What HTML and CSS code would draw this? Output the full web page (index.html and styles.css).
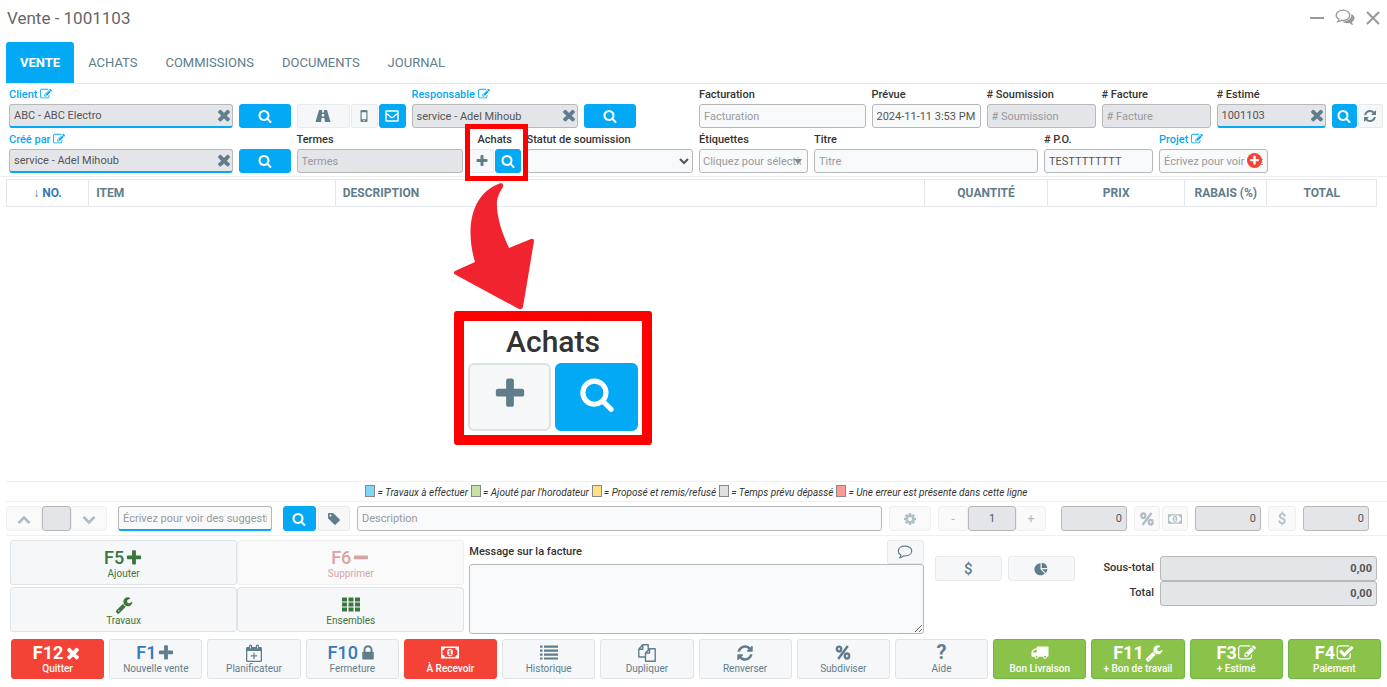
FILE: index.html
```html
<!DOCTYPE html>
<html lang="fr">
<head>
    <meta charset="UTF-8">
    <meta name="viewport" content="width=device-width, initial-scale=1.0">
    <title>Vente - 1001103</title>
    <link rel="stylesheet" href="styles.css">
</head>
<body>
    <!-- Icons -->
    <svg class="sprite" aria-hidden="true">
        <symbol id="search" viewBox="0 0 1792 1792"><path d="M1216 832q0-185-131.5-316.5t-316.5-131.5-316.5 131.5-131.5 316.5 131.5 316.5 316.5 131.5 316.5-131.5 131.5-316.5zm512 832q0 52-38 90t-90 38q-54 0-90-38l-343-342q-179 124-399 124-143 0-273.5-55.5t-225-150-150-225-55.5-273.5 55.5-273.5 150-225 225-150 273.5-55.5 273.5 55.5 225 150 150 225 55.5 273.5q0 220-124 399l343 343q37 37 37 90z"/></symbol>
        <symbol id="plus" viewBox="0 0 1792 1792"><path d="M1600 736v192q0 40-28 68t-68 28h-416v416q0 40-28 68t-68 28h-192q-40 0-68-28t-28-68v-416h-416q-40 0-68-28t-28-68v-192q0-40 28-68t68-28h416v-416q0-40 28-68t68-28h192q40 0 68 28t28 68v416h416q40 0 68 28t28 68z"/></symbol>
        <symbol id="minus" viewBox="0 0 1792 1792"><path d="M1600 736v192q0 40-28 68t-68 28h-1216q-40 0-68-28t-28-68v-192q0-40 28-68t68-28h1216q40 0 68 28t28 68z"/></symbol>
        <symbol id="times" viewBox="0 0 1792 1792"><path d="M1490 1322q0 40-28 68l-136 136q-28 28-68 28t-68-28l-294-294-294 294q-28 28-68 28t-68-28l-136-136q-28-28-28-68t28-68l294-294-294-294q-28-28-28-68t28-68l136-136q28-28 68-28t68 28l294 294 294-294q28-28 68-28t68 28l136 136q28 28 28 68t-28 68l-294 294 294 294q28 28 28 68z"/></symbol>
        <symbol id="edit" viewBox="0 0 1792 1792"><path d="M888 1184l116-116-152-152-116 116v56h96v96h56zm440-720q-16-16-33 1l-350 350q-17 17-1 33t33-1l350-350q17-17 1-33zm80 594v190q0 119-84.5 203.5t-203.5 84.5h-832q-119 0-203.5-84.5t-84.5-203.5v-832q0-119 84.5-203.5t203.5-84.5h832q63 0 117 25 15 7 18 23 3 17-9 29l-49 49q-14 14-32 8-23-6-45-6h-832q-66 0-113 47t-47 113v832q0 66 47 113t113 47h832q66 0 113-47t47-113v-126q0-13 9-22l64-64q15-15 35-7t20 29zm-96-738l288 288-672 672h-288v-288zm444 132l-92 92-288-288 92-92q28-28 68-28t68 28l152 152q28 28 28 68t-28 68z"/></symbol>
        <symbol id="check" viewBox="0 0 1792 1792"><path d="M1472 930v318q0 119-84.5 203.5t-203.5 84.5h-832q-119 0-203.5-84.5t-84.5-203.5v-832q0-119 84.5-203.5t203.5-84.5h832q63 0 117 25 15 7 18 23 3 17-9 29l-49 49q-10 10-23 10-3 0-9-2-23-6-45-6h-832q-66 0-113 47t-47 113v832q0 66 47 113t113 47h832q66 0 113-47t47-113v-254q0-13 9-22l64-64q10-10 23-10 6 0 12 3 20 8 20 29zm231-489l-814 814q-24 24-57 24t-57-24l-430-430q-24-24-24-57t24-57l110-110q24-24 57-24t57 24l263 263 647-647q24-24 57-24t57 24l110 110q24 24 24 57t-24 57z"/></symbol>
        <symbol id="wrench" viewBox="0 0 1792 1792"><path d="M448 1472q0-26-19-45t-45-19-45 19-19 45 19 45 45 19 45-19 19-45zm644-420l-682 682q-37 37-90 37-52 0-91-37l-106-108q-38-36-38-90 0-53 38-91l681-681q39 98 114.5 173.5t173.5 114.5zm634-435q0 39-23 106-47 134-164.5 217.5t-258.5 83.5q-185 0-316.5-131.5t-131.5-316.5 131.5-316.5 316.5-131.5q58 0 121.5 16.5t107.5 46.5q16 11 16 28t-16 28l-293 169v224l193 107q5-3 79-48.5t135.5-81 70.5-35.5q15 0 23.5 10t8.5 25z"/></symbol>
        <symbol id="lock" viewBox="0 0 1792 1792"><path d="M640 768h512v-192q0-106-75-181t-181-75-181 75-75 181v192zm832 96v576q0 40-28 68t-68 28h-960q-40 0-68-28t-28-68v-576q0-40 28-68t68-28h32v-192q0-184 132-316t316-132 316 132 132 316v192h32q40 0 68 28t28 68z"/></symbol>
        <symbol id="refresh" viewBox="0 0 1792 1792"><path d="M1639 1056q0 5-1 7-64 268-268 434.5t-478 166.5q-146 0-282.5-55t-243.5-157l-129 129q-19 19-45 19t-45-19-19-45v-448q0-26 19-45t45-19h448q26 0 45 19t19 45-19 45l-137 137q71 66 161 102t187 36q134 0 250-65t186-179q11-17 53-117 8-23 30-23h192q13 0 22.5 9.5t9.5 22.5zm25-800v448q0 26-19 45t-45 19h-448q-26 0-45-19t-19-45 19-45l138-138q-148-137-349-137-134 0-250 65t-186 179q-11 17-53 117-8 23-30 23h-199q-13 0-22.5-9.5t-9.5-22.5v-7q65-268 270-434.5t480-166.5q146 0 284 55.5t245 156.5l130-129q19-19 45-19t45 19 19 45z"/></symbol>
        <symbol id="up" viewBox="0 0 1792 1792"><path d="M1683 1331l-166 165q-19 19-45 19t-45-19l-531-531-531 531q-19 19-45 19t-45-19l-166-165q-19-19-19-45.5t19-45.5l742-741q19-19 45-19t45 19l742 741q19 19 19 45.5t-19 45.5z"/></symbol>
        <symbol id="down" viewBox="0 0 1792 1792"><path d="M1683 808l-742 741q-19 19-45 19t-45-19l-742-741q-19-19-19-45.5t19-45.5l166-165q19-19 45-19t45 19l531 531 531-531q19-19 45-19t45 19l166 165q19 19 19 45.5t-19 45.5z"/></symbol>
        <symbol id="cog" viewBox="0 0 1792 1792"><path d="M1152 896q0-106-75-181t-181-75-181 75-75 181 75 181 181 75 181-75 75-181zm512-109v222q0 12-8 23t-20 13l-185 28q-19 54-39 91 35 50 107 138 10 12 10 25t-9 23q-27 37-99 108t-94 71q-12 0-26-9l-138-108q-44 23-91 38-16 136-29 186-7 28-36 28h-222q-14 0-24.5-8.5t-11.5-21.5l-28-184q-49-16-90-37l-141 107q-10 9-25 9-14 0-25-11-126-114-165-168-7-10-7-23 0-12 8-23 15-21 51-66.5t54-70.5q-27-50-41-99l-183-27q-13-2-21-12.5t-8-23.5v-222q0-12 8-23t19-13l186-28q14-46 39-92-40-57-107-138-10-12-10-24 0-10 9-23 26-36 98.5-107.5t94.5-71.5q13 0 26 10l138 107q44-23 91-38 16-136 29-186 7-28 36-28h222q14 0 24.5 8.5t11.5 21.5l28 184q49 16 90 37l142-107q9-9 24-9 13 0 25 10 129 119 165 170 7 8 7 22 0 12-8 23-15 21-51 66.5t-54 70.5q26 50 41 98l183 28q13 2 21 12.5t8 23.5z"/></symbol>
        <symbol id="tag" viewBox="0 0 1792 1792"><path d="M576 448q0-53-37.5-90.5t-90.5-37.5-90.5 37.5-37.5 90.5 37.5 90.5 90.5 37.5 90.5-37.5 37.5-90.5zm1067 576q0 53-37 90l-491 492q-39 37-91 37-53 0-90-37l-715-716q-38-37-64.5-101t-26.5-117v-416q0-52 38-90t90-38h416q53 0 117 26.5t102 64.5l715 714q37 39 37 91z"/></symbol>
        <symbol id="truck" viewBox="0 0 18 14"><path fill-rule="evenodd" d="M6.500 1h10.300a.7.700 0 0 1 .7.700v8.800a.7.700 0 0 1-.7.700H16a2 2 0 0 1-4 0H7.500a2 2 0 0 1-4 0H1.200a.7.700 0 0 1-.7-.7V6.500q0-.6.400-1l2-2q.5-.5 1.100-.5h1.800V1.700a.7.700 0 0 1 .7-.7zM4 4.300L2 6.300v.7h3.800V4.300zM5.500 10.300a.9.900 0 1 0 .01 0zM14 10.300a.9.900 0 1 0 .01 0z"/></symbol>
        <symbol id="road" viewBox="0 0 18 14"><path d="M5 1h3.200l-.2 2.500h2l-.2-2.500H13l3.500 12h-5.700l-.3-4h-3l-.3 4H1.500zM7.900 5l-.2 2.500h2.600L10.100 5z"/></symbol>
        <symbol id="mobile" viewBox="0 0 14 14"><path fill-rule="evenodd" d="M4.500 1h5a1 1 0 0 1 1 1v10a1 1 0 0 1-1 1h-5a1 1 0 0 1-1-1V2a1 1 0 0 1 1-1zM4.700 3.200v7h4.600v-7zM7 11a.7.700 0 1 0 .01 0z"/></symbol>
        <symbol id="mail" viewBox="0 0 14 14"><path fill="none" stroke="currentColor" stroke-width="1.400" stroke-linejoin="round" d="M1 2h12v10H1zM1 4l5 4.200q1 .7 2 0L13 4"/></symbol>
        <symbol id="th" viewBox="0 0 18 14"><path d="M0 0h5v4H0zM6.500 0h5v4h-5zM13 0h5v4h-5zM0 5h5v4H0zM6.500 5h5v4h-5zM13 5h5v4h-5zM0 10h5v4H0zM6.500 10h5v4h-5zM13 10h5v4h-5z"/></symbol>
        <symbol id="list" viewBox="0 0 18 14"><path d="M0 0h2.500v2.200H0zM4 0h14v2.200H4zM0 4h2.500v2.200H0zM4 4h14v2.200H4zM0 8h2.500v2.200H0zM4 8h14v2.200H4zM0 12h2.500v2H0zM4 12h14v2H4z"/></symbol>
        <symbol id="money" viewBox="0 0 18 14"><path fill-rule="evenodd" d="M0 1h18v12H0zM3.800 2.500a2.500 2.500 0 0 1-2.300 2.300v4.400a2.500 2.500 0 0 1 2.300 2.300h10.400a2.500 2.500 0 0 1 2.300-2.300V4.800a2.500 2.500 0 0 1-2.300-2.300zM9 3.300a2.900 3.700 0 1 1 0 7.400 2.900 3.700 0 0 1 0-7.400zM8.500 4.700l-1.300 1.100.6.700.5-.4v2.300h-1v.9h3.400v-.9h-1V4.700z"/></symbol>
        <symbol id="calendar" viewBox="0 0 18 18"><path fill-rule="evenodd" d="M2.300 3H4V2a1.600 1.600 0 0 1 3.200 0v1h3.600V2A1.600 1.600 0 0 1 14 2v1h1.700A1.300 1.300 0 0 1 17 4.300v12.400a1.300 1.300 0 0 1-1.300 1.300H2.300A1.300 1.300 0 0 1 1 16.700V4.300A1.300 1.300 0 0 1 2.300 3zM2.300 7v9.700h13.400V7zM5.200 2v2.500h.8V2zM12 2v2.500h.8V2zM8.400 8.800h1.200v2.500h2.500v1.200H9.600V15H8.400v-2.500H5.900v-1.200h2.500z"/></symbol>
        <symbol id="copy" viewBox="0 0 18 18"><path fill="none" stroke="currentColor" stroke-width="1.400" stroke-linejoin="round" d="M7 13H.8V5.200L4.700.8h5.500V5M4.800 1v4.200h-4M7.500 9l3.800-4.200h5.900v12.500H7.500zM11.500 5v4h-4"/></symbol>
        <symbol id="pie" viewBox="0 0 14 14"><path d="M6.500 1.300V7.300l4.200 4.200A6 6 0 1 1 6.500 1.300zM8 7.200h5.500a6 6 0 0 1-1.700 3.800zM7.700.8A6 6 0 0 1 13.200 6H7.700z"/></symbol>
        <symbol id="comment" viewBox="0 0 16 16"><path fill="none" stroke="currentColor" stroke-width="1.200" stroke-linejoin="round" d="M8 2.200c3.800 0 6.700 2 6.700 4.900S11.800 12 8 12q-.7 0-1.500-.1Q4.700 13.700 2.500 14q1.200-1.100 1.400-2.900C2.300 10.200 1.300 8.800 1.300 7.100 1.300 4.200 4.200 2.200 8 2.200z"/></symbol>
        <symbol id="comments" viewBox="0 0 20 18"><path fill="none" stroke="currentColor" stroke-width="1.300" d="M8 1.200c3.800 0 6.800 2.200 6.800 5.100S11.800 11.400 8 11.400q-.9 0-1.700-.2-1.500 1.300-3.500 1.400 1-.9 1.200-2.300C2.300 9.400 1.200 8 1.200 6.300 1.200 3.400 4.200 1.200 8 1.200z"/><path d="M16.300 5c2 .9 3.200 2.300 3.200 4.200 0 1.500-1 2.900-2.600 3.700q.4 1.600 1.500 2.900-2.200-.1-3.800-1.900c-2.900.6-5.700 0-7.300-1.400 4.700.1 9-2.400 9-6z"/></symbol>
        <symbol id="percent" viewBox="0 0 14 14"><g fill="none" stroke="currentColor" stroke-width="2.300"><ellipse cx="3.300" cy="3.800" rx="2" ry="2.300"/><ellipse cx="10.700" cy="10.200" rx="2" ry="2.300"/><path d="M11.500 1L2.500 13"/></g></symbol>
    </svg>

    <div class="page">
        <header class="titlebar">
            <h1>Vente - 1001103</h1>
            <div class="window-tools">
                <button aria-label="Réduire"><svg viewBox="0 0 14 14"><path class="line" d="M0 7h14"/></svg></button>
                <button class="chat" aria-label="Discussion"><svg><use href="#comments"/></svg></button>
                <button aria-label="Fermer"><svg viewBox="0 0 14 14"><path class="line" d="M1 1l12 12M13 1L1 13"/></svg></button>
            </div>
        </header>

        <nav class="tabs">
            <a class="active" href="#vente">VENTE</a>
            <a href="#achats">ACHATS</a>
            <a href="#commissions">COMMISSIONS</a>
            <a href="#documents">DOCUMENTS</a>
            <a href="#journal">JOURNAL</a>
        </nav>

        <form class="fields">
            <div class="field w4 linked">
                <label for="client">Client <svg><use href="#edit"/></svg></label>
                <div class="box"><input id="client" class="locked" value="ABC - ABC Electro"><button type="button" class="clear" aria-label="Effacer"><svg><use href="#times"/></svg></button></div>
            </div>
            <div class="field"><button type="button" class="btn blue" aria-label="Chercher"><svg><use href="#search"/></svg></button></div>
            <div class="field w2">
                <div class="contact">
                    <button type="button" class="btn" aria-label="Itinéraire"><svg class="wide"><use href="#road"/></svg></button>
                    <button type="button" class="btn" aria-label="Mobile"><svg><use href="#mobile"/></svg></button>
                    <button type="button" class="btn blue" aria-label="Courriel"><svg><use href="#mail"/></svg></button>
                </div>
            </div>
            <div class="field w3 linked">
                <label for="responsable">Responsable <svg><use href="#edit"/></svg></label>
                <div class="box"><input id="responsable" class="locked plain" value="service - Adel Mihoub"><button type="button" class="clear" aria-label="Effacer"><svg><use href="#times"/></svg></button></div>
            </div>
            <div class="field"><button type="button" class="btn blue" aria-label="Chercher"><svg><use href="#search"/></svg></button></div>
            <div class="field"></div>
            <div class="field w3">
                <label for="facturation">Facturation</label>
                <input id="facturation" placeholder="Facturation">
            </div>
            <div class="field w2">
                <label for="prevue">Prévue</label>
                <input id="prevue" value="2024-11-11 3:53 PM">
            </div>
            <div class="field w2">
                <label for="soumission"># Soumission</label>
                <input id="soumission" class="locked" placeholder="# Soumission">
            </div>
            <div class="field w2">
                <label for="facture"># Facture</label>
                <input id="facture" class="locked" placeholder="# Facture">
            </div>
            <div class="field w2 linked dark">
                <label for="estime"># Estimé</label>
                <div class="box"><input id="estime" class="locked" value="1001103"><button type="button" class="clear" aria-label="Effacer"><svg><use href="#times"/></svg></button></div>
            </div>
            <div class="field">
                <div class="pair">
                    <button type="button" class="btn blue" aria-label="Chercher"><svg><use href="#search"/></svg></button>
                    <button type="button" class="btn" aria-label="Rafraîchir"><svg><use href="#refresh"/></svg></button>
                </div>
            </div>

            <div class="field w4 linked">
                <label for="cree">Créé par <svg><use href="#edit"/></svg></label>
                <div class="box"><input id="cree" class="locked" value="service - Adel Mihoub"><button type="button" class="clear" aria-label="Effacer"><svg><use href="#times"/></svg></button></div>
            </div>
            <div class="field"><button type="button" class="btn blue" aria-label="Chercher"><svg><use href="#search"/></svg></button></div>
            <div class="field w3">
                <label for="termes">Termes</label>
                <input id="termes" class="locked" placeholder="Termes">
            </div>
            <div class="field achats">
                <span class="caption">Achats</span>
                <div class="pair">
                    <button type="button" class="btn" aria-label="Ajouter un achat"><svg><use href="#plus"/></svg></button>
                    <button type="button" class="btn blue" aria-label="Chercher un achat"><svg><use href="#search"/></svg></button>
                </div>
                <!-- Highlight, arrow and enlarged copy of the Achats buttons -->
                <div class="highlight"></div>
                <svg class="arrow" viewBox="0 0 80 128"><path d="M47 1q3 1 2 4-5 7-6 14c-1 15 5 32 12 47l22-9q3-1 3 2l-11 66q-1 3-4 2L2 93q-4-2-1-4l20-9C11 46 17 11 47 1z"/></svg>
                <div class="callout">
                    <span>Achats</span>
                    <div class="callout-buttons">
                        <div class="big"><svg><use href="#plus"/></svg></div>
                        <div class="big blue"><svg><use href="#search"/></svg></div>
                    </div>
                </div>
            </div>
            <div class="field w3">
                <label for="statut">Statut de soumission</label>
                <select id="statut"><option></option></select>
            </div>
            <div class="field w2">
                <label for="etiquettes">Étiquettes</label>
                <div class="box tags"><input id="etiquettes" placeholder="Cliquez pour sélectionner"></div>
            </div>
            <div class="field w4">
                <label for="titre">Titre</label>
                <input id="titre" placeholder="Titre">
            </div>
            <div class="field w2">
                <label for="po"># P.O.</label>
                <input id="po" value="TESTTTTTTTT">
            </div>
            <div class="field w2 project">
                <label for="projet">Projet <svg><use href="#edit"/></svg></label>
                <div class="box"><input id="projet" placeholder="Écrivez pour voir des suggestions"><button type="button" class="add" aria-label="Ajouter"><svg><use href="#plus"/></svg></button></div>
            </div>
        </form>

        <main class="items">
            <table>
                <thead>
                    <tr>
                        <th class="c-no">↓ NO.</th>
                        <th class="c-item">ITEM</th>
                        <th class="c-desc">DESCRIPTION</th>
                        <th class="c-qty">QUANTITÉ</th>
                        <th class="c-price">PRIX</th>
                        <th class="c-off">RABAIS (%)</th>
                        <th class="c-total">TOTAL</th>
                    </tr>
                </thead>
            </table>
        </main>

        <div class="legend">
            <span><i class="todo"></i>= Travaux à effectuer</span>
            <span><i class="clock"></i>= Ajouté par l'horodateur</span>
            <span><i class="refused"></i>= Proposé et remis/refusé</span>
            <span><i class="late"></i>= Temps prévu dépassé</span>
            <span><i class="error"></i>= Une erreur est présente dans cette ligne</span>
        </div>

        <div class="entry">
            <div class="group mover">
                <button class="btn" disabled aria-label="Monter"><svg><use href="#up"/></svg></button>
                <input class="locked" aria-label="Position">
                <button class="btn" disabled aria-label="Descendre"><svg><use href="#down"/></svg></button>
            </div>
            <input class="suggest" placeholder="Écrivez pour voir des suggestions" aria-label="Item">
            <div class="pair lookup">
                <button class="btn blue" aria-label="Chercher"><svg><use href="#search"/></svg></button>
                <button class="btn" aria-label="Étiquette"><svg><use href="#tag"/></svg></button>
            </div>
            <input class="description" placeholder="Description" aria-label="Description">
            <button class="btn gear" disabled aria-label="Options"><svg><use href="#cog"/></svg></button>
            <div class="group stepper">
                <button class="btn" disabled>-</button>
                <input class="locked" value="1" aria-label="Quantité">
                <button class="btn" disabled>+</button>
            </div>
            <input class="locked amount" value="0" aria-label="Prix">
            <div class="pair rebate">
                <button class="btn" disabled aria-label="Pourcentage"><svg><use href="#percent"/></svg></button>
                <button class="btn" disabled aria-label="Montant"><svg><use href="#money"/></svg></button>
            </div>
            <input class="locked amount" value="0" aria-label="Rabais">
            <button class="btn dollar" disabled>$</button>
            <input class="locked amount" value="0" aria-label="Total de la ligne">
        </div>

        <section class="summary">
            <div class="keypad">
                <button class="key add-key"><span class="top">F5<svg><use href="#plus"/></svg></span>Ajouter</button>
                <button class="key del-key" disabled><span class="top">F6<svg><use href="#minus"/></svg></span>Supprimer</button>
                <button class="key add-key"><span class="top"><svg><use href="#wrench"/></svg></span>Travaux</button>
                <button class="key add-key"><span class="top"><svg class="wide"><use href="#th"/></svg></span>Ensembles</button>
            </div>
            <div class="message">
                <div class="message-head">
                    <label for="message">Message sur la facture</label>
                    <button class="btn" aria-label="Commentaire"><svg><use href="#comment"/></svg></button>
                </div>
                <textarea id="message"></textarea>
            </div>
            <div class="tools">
                <button class="btn money-btn">$</button>
                <button class="btn" aria-label="Graphique"><svg><use href="#pie"/></svg></button>
            </div>
            <div class="totals">
                <label for="soustotal">Sous-total</label><input id="soustotal" class="locked" value="0,00">
                <label for="total">Total</label><input id="total" class="locked" value="0,00">
            </div>
        </section>

        <footer class="actions">
            <button class="key red"><span class="top">F12<svg><use href="#times"/></svg></span>Quitter</button>
            <button class="key"><span class="top"><b>F1</b><svg><use href="#plus"/></svg></span>Nouvelle vente</button>
            <button class="key"><span class="top"><svg><use href="#calendar"/></svg></span>Planificateur</button>
            <button class="key"><span class="top"><b>F10</b><svg><use href="#lock"/></svg></span>Fermeture</button>
            <button class="key red"><span class="top"><svg class="wide"><use href="#money"/></svg></span>À Recevoir</button>
            <button class="key"><span class="top"><svg class="wide"><use href="#list"/></svg></span>Historique</button>
            <button class="key"><span class="top"><svg><use href="#copy"/></svg></span>Dupliquer</button>
            <button class="key"><span class="top"><svg><use href="#refresh"/></svg></span>Renverser</button>
            <button class="key"><span class="top"><svg class="wide"><use href="#percent"/></svg></span>Subdiviser</button>
            <button class="key"><span class="top help">?</span>Aide</button>
            <button class="key green"><span class="top"><svg class="wide"><use href="#truck"/></svg></span>Bon Livraison</button>
            <button class="key green"><span class="top">F11<svg><use href="#wrench"/></svg></span>+ Bon de travail</button>
            <button class="key green"><span class="top">F3<svg><use href="#edit"/></svg></span>+ Estimé</button>
            <button class="key green"><span class="top">F4<svg><use href="#check"/></svg></span>Paiement</button>
        </footer>
    </div>
</body>
</html>
```
FILE: styles.css
```css
* {
    box-sizing: border-box;
}
body {
    margin: 0;
    font-family: Roboto, sans-serif;
    font-size: 11px;
    color: #333;
    background-color: #fff;
}
button, input, select, textarea {
    font: inherit;
    margin: 0;
    min-width: 0;
}
button {
    padding: 0;
    cursor: pointer;
}
svg {
    width: 14px;
    height: 14px;
    fill: currentColor;
    flex: none;
}
svg.wide {
    width: 18px;
}
.sprite {
    display: none;
}
.page {
    min-height: 100vh;
    display: flex;
    flex-direction: column;
    padding-bottom: 8px;
}

/* Title and tabs */
.titlebar {
    display: flex;
    justify-content: space-between;
    align-items: center;
    height: 36px;
    padding: 0 7px;
    margin-bottom: 6px;
}
h1 {
    margin: 0;
    font-size: 17px;
    font-weight: 400;
    color: #666;
}
.window-tools {
    display: flex;
    align-items: center;
    gap: 11px;
}
.window-tools button {
    display: flex;
    border: none;
    background: none;
    color: #999;
}
.window-tools .chat svg {
    width: 20px;
    height: 18px;
}
.line {
    fill: none;
    stroke: currentColor;
    stroke-width: 2;
}
.tabs {
    display: flex;
    margin-left: 6px;
    border-bottom: 1px solid #e6e6e6;
}
.tabs a {
    padding: 0 14px;
    line-height: 41px;
    font-size: 13px;
    color: #607d8b;
    text-decoration: none;
}
.tabs .active {
    background-color: #03a9f4;
    color: #fff;
    font-weight: 700;
    border-radius: 3px 3px 0 0;
}

/* Form fields */
.fields {
    display: grid;
    grid-template-columns: repeat(24, minmax(0, 1fr));
    column-gap: 6px;
    row-gap: 1px;
    padding: 0 4px 3px 9px;
    border-bottom: 1px solid #eee;
}
.field {
    display: flex;
    flex-direction: column;
    justify-content: flex-end;
    height: 44px;
}
.w2 {
    grid-column: span 2;
}
.w3 {
    grid-column: span 3;
}
.w4 {
    grid-column: span 4;
}
label, .caption {
    font-weight: 500;
    line-height: 18px;
    white-space: nowrap;
}
label svg {
    width: 12px;
    height: 12px;
    vertical-align: -2px;
}
.linked label, .project label {
    color: #03a9f4;
}
.dark label {
    color: #333;
}
input, select, textarea {
    width: 100%;
    height: 24px;
    padding: 0 4px;
    border: 1px solid #b8b8b8;
    border-radius: 3px;
    background-color: #f8f9fb;
    color: #555;
}
input::placeholder {
    color: #999;
}
.locked {
    background-color: #e4e5e9;
}
.box {
    position: relative;
    display: flex;
}
.linked input, .suggest {
    border-bottom: 2px solid #03a9f4;
}
.linked .plain {
    border-bottom: 1px solid #b8b8b8;
}
.clear {
    position: absolute;
    right: 0;
    top: 2px;
    display: flex;
    border: none;
    background: none;
    color: #607d8b;
}
.clear svg {
    width: 18px;
    height: 18px;
}
.tags::after {
    content: "";
    position: absolute;
    right: 6px;
    top: 10px;
    border: 4px solid transparent;
    border-top: 5px solid #888;
}
.tags input {
    padding: 0 6px 0 3px;
}
.add {
    position: absolute;
    right: 6px;
    top: 4px;
    display: flex;
    padding: 2px;
    border: none;
    border-radius: 50%;
    background-color: #f44336;
    color: #fff;
}
.add svg {
    width: 11px;
    height: 11px;
}
.btn {
    display: flex;
    align-items: center;
    justify-content: center;
    height: 24px;
    border: 1px solid #e6eaed;
    border-radius: 3px;
    background-color: #f6f7f9;
    color: #607d8b;
}
.btn.blue {
    border-color: #03a9f4;
    background-color: #03a9f4;
    color: #fff;
}
.btn:disabled {
    background-color: #fafafa;
    border-color: #efefef;
    color: #b0bec5;
}
.contact {
    display: grid;
    grid-template-columns: 2fr 1fr 1fr;
    gap: 1px;
}
.pair {
    display: grid;
    grid-template-columns: 1fr 1fr;
    gap: 1px;
}

/* Achats highlight */
.achats {
    position: relative;
}
.caption {
    text-align: center;
}
.highlight {
    position: absolute;
    left: -4px;
    top: -5px;
    width: 63px;
    height: 57px;
    border: 5px solid #f00;
    z-index: 1;
}
.arrow {
    position: absolute;
    left: -15px;
    top: 53px;
    width: 80px;
    height: 128px;
    fill: #f0232e;
    z-index: 1;
}
.callout {
    position: absolute;
    left: -15px;
    top: 182px;
    width: 198px;
    height: 134px;
    padding: 0 4px;
    border: 10px solid #f00;
    border-radius: 3px;
    background-color: #fff;
    z-index: 1;
    font-size: 30px;
    font-weight: 500;
    line-height: 42px;
    text-align: center;
}
.callout-buttons {
    display: grid;
    grid-template-columns: 1fr 1fr;
    gap: 4px;
}
.big {
    display: flex;
    align-items: center;
    justify-content: center;
    height: 68px;
    padding-bottom: 6px;
    border: 2px solid #dbe2e5;
    border-radius: 6px;
    background-color: #f6f7f9;
    color: #607d8b;
}
.big svg {
    width: 36px;
    height: 36px;
}
.big.blue {
    border-color: #03a9f4;
    background-color: #03a9f4;
    color: #fff;
}

/* Items table */
.items {
    flex: 1;
    padding: 2px 10px 0 6px;
}
table {
    width: 100%;
    table-layout: fixed;
    border-collapse: collapse;
}
th {
    height: 27px;
    padding: 0 7px;
    border: 1px solid #e4e8ec;
    font-size: 12px;
    font-weight: 700;
    color: #607d8b;
}
.c-no {
    width: 6%;
    color: #337ab7;
}
.c-item {
    width: 18%;
    text-align: left;
}
.c-desc {
    width: 43%;
    text-align: left;
}
.c-qty {
    width: 9%;
}
.c-price {
    width: 10%;
}
.c-off {
    width: 6%;
    padding: 0;
}
.c-total {
    width: 8%;
}

/* Legend */
.legend {
    display: flex;
    justify-content: center;
    align-items: center;
    gap: 3px;
    height: 20px;
    margin-left: 6px;
    border-top: 1px solid #f0f0f0;
    font-size: 10px;
    font-style: italic;
}
.legend i {
    display: inline-block;
    width: 10px;
    height: 12px;
    margin-right: 2px;
    border: 1px solid #888;
    vertical-align: -1px;
}
.todo {
    background-color: #81d4fa;
}
.clock {
    background-color: #c5e1a5;
}
.refused {
    background-color: #ffe082;
}
.late {
    background-color: #e0e0e0;
}
.error {
    background-color: #ff9a93;
}

/* Entry line */
.entry {
    display: flex;
    align-items: center;
    gap: 7px;
    height: 35px;
    margin-left: 6px;
    padding-right: 18px;
    border-top: 1px solid #f0f0f0;
    border-bottom: 1px solid #f0f0f0;
}
.entry input {
    height: 25px;
}
.entry .btn {
    height: 25px;
}
.group {
    display: flex;
    flex: none;
}
.mover {
    width: 101px;
    margin-right: 4px;
}
.mover .btn {
    width: 36px;
    flex: none;
}
.stepper {
    width: 108px;
    margin-right: 8px;
}
.stepper .btn {
    width: 30px;
    flex: none;
    font-size: 13px;
}
.stepper input {
    text-align: center;
}
.entry .suggest {
    flex: none;
    width: 154px;
    margin-right: 4px;
}
.lookup {
    flex: none;
    width: 67px;
    gap: 2px;
}
.gear {
    flex: none;
    width: 42px;
}
.entry .amount {
    flex: none;
    width: 66px;
    text-align: right;
}
.rebate {
    flex: none;
    width: 54px;
    gap: 2px;
}
.dollar, .money-btn {
    font-size: 15px;
    font-weight: 500;
}
.dollar {
    flex: none;
    width: 28px;
}

/* Keypad, message and totals */
.summary {
    display: grid;
    grid-template-columns: 454fr 454fr 146fr 297fr;
    column-gap: 5px;
    padding: 4px 10px 5px;
}
.keypad {
    display: grid;
    grid-template-columns: 1fr 1fr;
    grid-auto-rows: 45px;
    row-gap: 2px;
}
.key {
    display: flex;
    flex-direction: column;
    align-items: center;
    justify-content: center;
    border: 1px solid #dfe4e8;
    border-radius: 3px;
    background-color: #f6f7f9;
    color: #607d8b;
    font-size: 10px;
    line-height: 13px;
    white-space: nowrap;
}
.keypad .key {
    padding-top: 3px;
}
.top {
    display: flex;
    align-items: center;
    gap: 1px;
    height: 19px;
    font-size: 18px;
    font-weight: 500;
}
.top b {
    font-weight: 500;
    color: #337ab7;
}
.top svg {
    height: 18px;
    width: 18px;
}
.top svg.wide {
    height: 15px;
}
.help {
    font-size: 20px;
    font-weight: 700;
}
.add-key {
    color: #3c763d;
}
.del-key {
    background-color: #fafafa;
    border-color: #efefef;
    color: #d9a3a2;
}
.message-head {
    display: flex;
    justify-content: space-between;
}
.message-head label, .totals label {
    line-height: 24px;
}
.message-head .btn {
    width: 37px;
}
.message-head svg {
    width: 16px;
    height: 16px;
}
textarea {
    display: block;
    height: 70px;
}
.tools {
    display: grid;
    grid-template-columns: 1fr 1fr;
    align-items: start;
    gap: 6px;
    padding: 16px 0 0 6px;
}
.tools .btn {
    height: 25px;
}
.totals {
    display: grid;
    grid-template-columns: 1fr 217px;
    align-content: start;
    column-gap: 6px;
    padding-top: 16px;
    text-align: right;
}
.totals input {
    height: 25px;
    text-align: right;
    font-weight: 700;
}

/* Footer buttons */
.actions {
    display: grid;
    grid-template-columns: repeat(14, minmax(0, 1fr));
    gap: 5px;
    padding: 0 6px 0 11px;
}
.actions .key {
    height: 40px;
}
.key.red {
    border-color: #f44336;
    background-color: #f44336;
    color: #fff;
    font-weight: 500;
}
.key.green {
    border-color: #6cb845;
    background-color: #8bc34a;
    color: #fff;
    font-weight: 500;
}
.red .top, .green .top {
    font-weight: 700;
}
```
